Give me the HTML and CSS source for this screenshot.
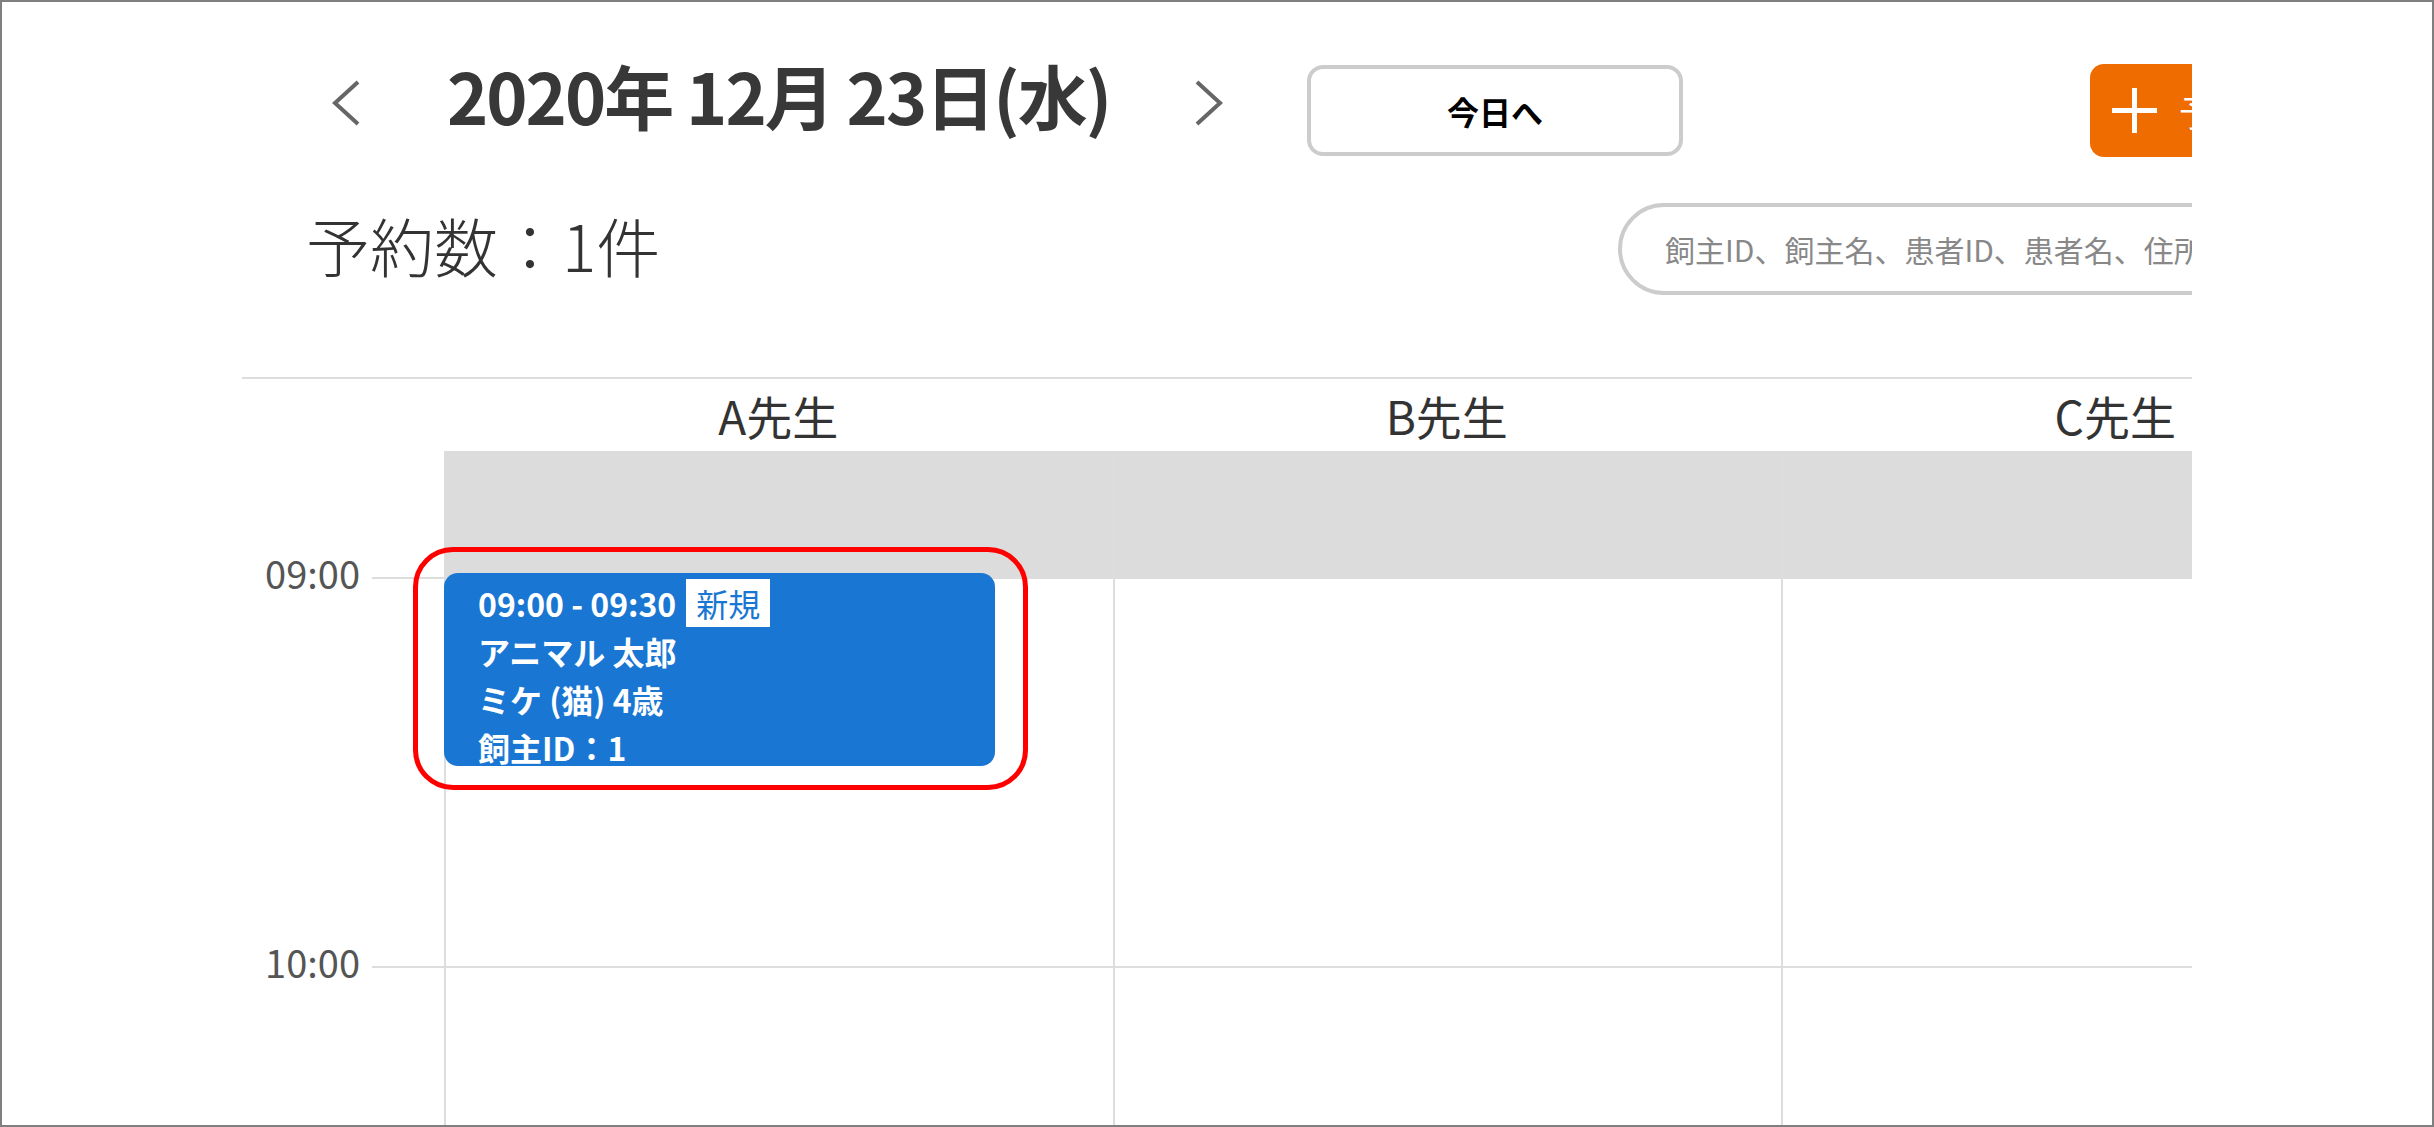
FILE: index.html
```html
<!DOCTYPE html>
<html lang="ja">
<head>
    <title>予約一覧</title>
    <meta charset="utf-8">
    <link rel="stylesheet" href="styles.css">
</head>

<body>
    <div class="frame">
        <div class="viewport">
            <div class="page">
                <header class="toolbar">
                    <button class="nav-arrow" aria-label="前の日">
                        <svg viewBox="0 0 28 46" width="28" height="46"><polyline points="26,2 3,23 26,44"/></svg>
                    </button>
                    <h1 class="date-title">2020年 12月 23日(水)</h1>
                    <button class="nav-arrow next" aria-label="次の日">
                        <svg viewBox="0 0 28 46" width="28" height="46"><polyline points="2,2 25,23 2,44"/></svg>
                    </button>
                    <button class="today-btn">今日へ</button>
                    <button class="add-btn">
                        <svg viewBox="0 0 45 45" width="45" height="45"><path d="M22.5 0V45M0 22.5H45"/></svg>
                        予約登録
                    </button>
                </header>

                <div class="summary">
                    <p class="count">予約数：1件</p>
                    <input class="search" type="text" placeholder="飼主ID、飼主名、患者ID、患者名、住所、電話番号">
                </div>

                <div class="schedule">
                    <div class="time-col">
                        <div class="col-head"></div>
                        <div class="off-spacer"></div>
                        <div class="time-slot"><span class="time-label">09:00</span><span class="tick"></span></div>
                        <div class="time-slot"><span class="time-label">10:00</span><span class="tick"></span></div>
                    </div>

                    <div class="staff-col">
                        <div class="col-head">A先生</div>
                        <div class="col-body">
                            <div class="off-hours"></div>
                            <div class="slot">
                                <div class="event">
                                    <div class="event-line">09:00 - 09:30<span class="badge">新規</span></div>
                                    <div class="event-line">アニマル 太郎</div>
                                    <div class="event-line">ミケ (猫) 4歳</div>
                                    <div class="event-line">飼主ID：1</div>
                                </div>
                                <div class="highlight"></div>
                            </div>
                            <div class="slot"></div>
                        </div>
                    </div>

                    <div class="staff-col">
                        <div class="col-head">B先生</div>
                        <div class="col-body">
                            <div class="off-hours"></div>
                            <div class="slot"></div>
                            <div class="slot"></div>
                        </div>
                    </div>

                    <div class="staff-col">
                        <div class="col-head">C先生</div>
                        <div class="col-body">
                            <div class="off-hours"></div>
                            <div class="slot"></div>
                            <div class="slot"></div>
                        </div>
                    </div>
                </div>
            </div>
        </div>
    </div>
</body>
</html>
```

FILE: styles.css
```css
body {
    margin: 0;
    background: #fff;
    color: #333;
    font-family: "Noto Sans CJK JP", "Noto Sans", sans-serif;
}

button,
input {
    font-family: inherit;
}

.frame {
    width: 2434px;
    height: 1127px;
    box-sizing: border-box;
    border: 2px solid #7f7f7f;
    overflow: hidden;
}

.viewport {
    width: 2190px;
    height: 100%;
    overflow: hidden;
}

.page {
    width: 2350px;
    padding-top: 62px;
}

/* ---------- toolbar ---------- */
.toolbar {
    display: flex;
    align-items: center;
    height: 93px;
    padding-left: 330px;
}

.toolbar > * {
    flex: none;
}

.nav-arrow {
    width: 28px;
    height: 46px;
    padding: 0;
    border: 0;
    background: none;
    margin-bottom: 15px;
}

.nav-arrow svg {
    display: block;
    fill: none;
    stroke: #666;
    stroke-width: 4;
}

.nav-arrow.next {
    margin-left: 90px;
}

.date-title {
    width: 658px;
    margin: 0 0 32px 87px;
    font-size: 70px;
    line-height: 96px;
    font-weight: 700;
    letter-spacing: -2px;
    white-space: nowrap;
    color: #383838;
}

.today-btn {
    width: 376px;
    height: 91px;
    margin-left: 84px;
    background: #fff;
    border: 4px solid #ccc;
    border-radius: 16px;
    color: #000;
    font-size: 32px;
    font-weight: 700;
}

.add-btn {
    display: flex;
    align-items: center;
    gap: 22px;
    width: 262px;
    height: 93px;
    margin-left: auto;
    padding: 0 0 0 22px;
    background: #ef6c00;
    border: 0;
    border-radius: 14px;
    color: #fff;
    font-size: 36px;
    white-space: nowrap;
}

.add-btn svg {
    flex: none;
    stroke: #fff;
    stroke-width: 5;
}

/* ---------- summary ---------- */
.summary {
    display: flex;
    align-items: center;
    height: 92px;
    margin-top: 46px;
    padding-left: 304px;
}

.count {
    margin: 0 0 10px;
    font-size: 64px;
    line-height: 80px;
    font-weight: 300;
    white-space: nowrap;
}

.search {
    flex: none;
    width: 734px;
    height: 92px;
    margin-left: auto;
    box-sizing: border-box;
    padding: 0 0 0 43px;
    border: 4px solid #ccc;
    border-radius: 46px;
    font-size: 30px;
    color: #333;
    outline: none;
}

.search::placeholder {
    color: #888;
}

/* ---------- schedule ---------- */
.schedule {
    display: grid;
    grid-template-columns: 202px repeat(3, 668.5px);
    margin: 82px 0 0 240px;
    border-top: 2px solid #ddd;
}

.col-head {
    height: 72px;
    font-size: 46px;
    line-height: 72px;
    text-align: center;
    white-space: nowrap;
}

.off-spacer {
    height: 126px;
}

.time-slot {
    display: flex;
    align-items: flex-start;
    height: 389px;
}

.time-label {
    width: 118px;
    margin-top: -28px;
    font-size: 38px;
    line-height: 48px;
    text-align: right;
    color: #555;
}

.tick {
    flex: 1;
    margin-left: 12px;
    border-top: 2px solid #ddd;
}

.col-body {
    border-left: 2px solid #ddd;
}

.off-hours {
    height: 126px;
    background: #dcdcdc;
}

.slot {
    position: relative;
    height: 389px;
    box-sizing: border-box;
    border-top: 2px solid #ddd;
}

.event {
    position: absolute;
    top: -6px;
    left: -2px;
    width: 551px;
    height: 193px;
    box-sizing: border-box;
    padding: 6px 0 0 34px;
    background: #1976d2;
    border-radius: 14px;
    color: #fff;
    font-size: 32px;
    line-height: 48px;
    font-weight: 700;
    overflow: hidden;
    white-space: nowrap;
}

.badge {
    display: inline-block;
    margin-left: 10px;
    padding: 0 10px;
    background: #fff;
    color: #1976d2;
    font-weight: 400;
    vertical-align: top;
}

.highlight {
    position: absolute;
    top: -32px;
    left: -33px;
    width: 615px;
    height: 243px;
    box-sizing: border-box;
    border: 5px solid #f00;
    border-radius: 40px;
}
```
